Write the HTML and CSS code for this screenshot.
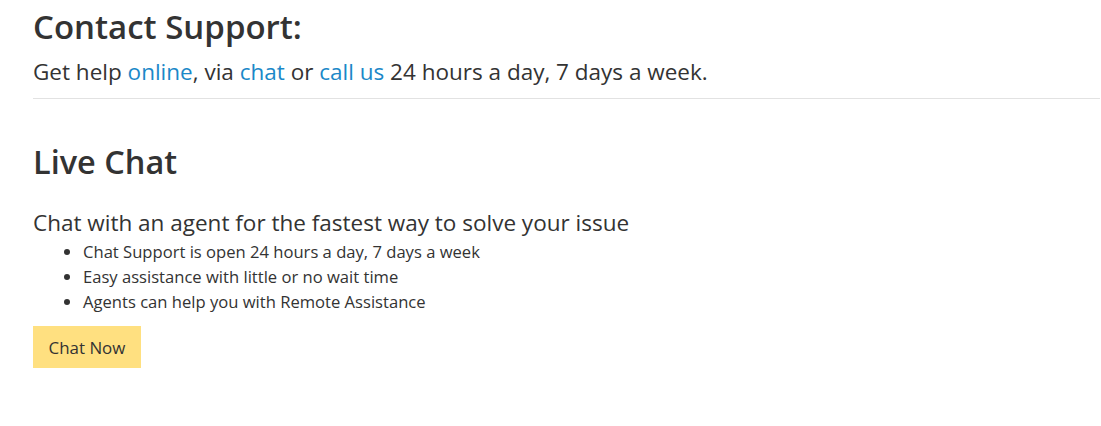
FILE: index.html
```html
<!DOCTYPE html>
<html lang="en">
<head>
<meta charset="utf-8">
<title>Contact Support</title>
<link rel="stylesheet" href="styles.css">
</head>
<body>
<div class="page">
  <header class="intro">
    <h1 class="title">Contact Support:</h1>
    <p class="lead">Get help <a href="#">online</a>, via <a href="#">chat</a> or <a href="#">call us</a> 24 hours a day, 7 days a week.</p>
  </header>
  <section class="chat">
    <h2 class="chat-title">Live Chat</h2>
    <p class="chat-lead">Chat with an agent for the fastest way to solve your issue</p>
    <ul class="chat-list">
      <li>Chat Support is open 24 hours a day, 7 days a week</li>
      <li>Easy assistance with little or no wait time</li>
      <li>Agents can help you with Remote Assistance</li>
    </ul>
    <button class="chat-btn" type="button">Chat Now</button>
  </section>
</div>
</body>
</html>
```

FILE: styles.css
```css
html, body {
  margin: 0;
  padding: 0;
  background: #fff;
}
body {
  font-family: "Open Sans", "Noto Sans", sans-serif;
  color: #333;
}
.page {
  padding-left: 33px;
  padding-right: 1px;
}
.intro {
  border-bottom: 1px solid #e2e2e2;
  padding-bottom: 11px;
}
.title {
  margin: 0;
  padding-top: 7px;
  font-size: 33px;
  font-weight: 600;
  line-height: 40px;
}
.lead {
  margin: 10px 0 0;
  font-size: 22.5px;
  line-height: 30px;
}
.lead a {
  color: #1b88c8;
  text-decoration: none;
}
.chat-title {
  margin: 41px 0 0;
  font-size: 32.5px;
  font-weight: 600;
  line-height: 44px;
}
.chat-lead {
  margin: 24px 0 0;
  font-size: 22.5px;
  line-height: 30px;
}
.chat-list {
  margin: 1px 0 0;
  padding-left: 50px;
  font-size: 16.6px;
  line-height: 25px;
}
.chat-btn {
  margin-top: 12px;
  display: block;
  width: 108px;
  height: 42px;
  padding: 0;
  border: 0;
  background: #ffe080;
  color: #333;
  font-family: inherit;
  font-size: 16.9px;
}
```
